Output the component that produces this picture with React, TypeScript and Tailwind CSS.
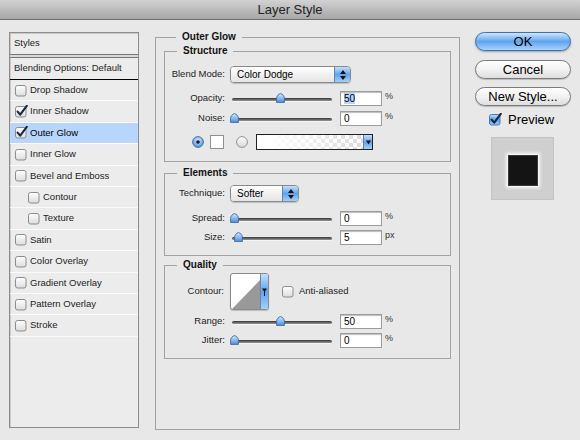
import type { ReactNode } from "react"

type StyleItem = { label: string; checked?: boolean; active?: boolean; indent?: boolean }

const styleItems: StyleItem[] = [
  { label: "Drop Shadow" },
  { label: "Inner Shadow", checked: true },
  { label: "Outer Glow", checked: true, active: true },
  { label: "Inner Glow" },
  { label: "Bevel and Emboss" },
  { label: "Contour", indent: true },
  { label: "Texture", indent: true },
  { label: "Satin" },
  { label: "Color Overlay" },
  { label: "Gradient Overlay" },
  { label: "Pattern Overlay" },
  { label: "Stroke" },
]

function CheckBox({ checked, aqua }: { checked?: boolean; aqua?: boolean }) {
  return (
    <svg width="13" height="13" viewBox="0 0 13 13" className="shrink-0">
      <defs>
        <linearGradient id="cbw" x1="0" y1="0" x2="0" y2="1">
          <stop offset="0" stopColor="#ffffff" />
          <stop offset="1" stopColor="#dcdcdc" />
        </linearGradient>
        <linearGradient id="cba" x1="0" y1="0" x2="0" y2="1">
          <stop offset="0" stopColor="#c6e0fb" />
          <stop offset="0.5" stopColor="#5a9fec" />
          <stop offset="1" stopColor="#9ccbf7" />
        </linearGradient>
      </defs>
      <rect x="0.5" y="1.5" width="10.5" height="10.5" rx="2" fill={aqua ? "url(#cba)" : "url(#cbw)"} stroke={aqua ? "#4a78b4" : "#8c8c8c"} />
      {checked ? (
        <path d="M2.6 6.6 L5.2 9.6 L11.8 0.8" fill="none" stroke="#1a2644" strokeWidth="2.1" strokeLinecap="round" strokeLinejoin="round" />
      ) : null}
    </svg>
  )
}

function Thumb() {
  return (
    <svg width="9" height="10" viewBox="0 0 9 10">
      <defs>
        <linearGradient id="thg" x1="0" y1="0" x2="0" y2="1">
          <stop offset="0" stopColor="#d6e8fc" />
          <stop offset="1" stopColor="#4b8fe0" />
        </linearGradient>
      </defs>
      <path d="M0.6 9.4V5.2C0.6 3.2 2.6 0.9 4.5 0.6C6.4 0.9 8.4 3.2 8.4 5.2V9.4Z" fill="url(#thg)" stroke="#3c68a4" strokeWidth="0.9" />
    </svg>
  )
}

function Slider({ pos }: { pos: number }) {
  return (
    <div className="relative h-[14px] w-[102px]">
      <div className="absolute left-[2px] right-0 top-[6px] h-[3px] rounded-full bg-gradient-to-b from-[#353535] to-[#9a9a9a] shadow-[0_1px_0_#f4f4f4]" />
      <div className="absolute top-[1px]" style={{ left: pos }}>
        <Thumb />
      </div>
    </div>
  )
}

function NumberBox({ value, selected }: { value: string; selected?: boolean }) {
  return (
    <div className="h-[15px] w-[42px] border border-[#9c9c9c] bg-white pl-[3px] text-[10px] leading-[13px] text-black shadow-[inset_0_1px_1px_#bdbdbd]">
      <span className={selected ? "bg-[#b5d5ff]" : ""}>{value}</span>
    </div>
  )
}

function SliderRow({ label, value, unit, pos, selected, className }: { label: string; value: string; unit: string; pos: number; selected?: boolean; className?: string }) {
  return (
    <div className={"flex h-[15px] items-center " + (className ?? "")}>
      <div className="w-[62px] pr-[2px] text-right">{label}</div>
      <div className="ml-[3px]">
        <Slider pos={pos} />
      </div>
      <div className="ml-[8px]">
        <NumberBox value={value} selected={selected} />
      </div>
      <span className="ml-[3px] self-start text-[9px] leading-[10px] text-[#333]">{unit}</span>
    </div>
  )
}

function Stepper() {
  return (
    <div className="flex w-[16px] flex-col items-center justify-center gap-[2px] border-l border-[#5a86c0] bg-gradient-to-b from-[#c4e0fc] via-[#5ea2ec] to-[#a4d0f8]">
      <svg width="6" height="4" viewBox="0 0 6 4">
        <path d="M0 4L3 0L6 4Z" fill="#111" />
      </svg>
      <svg width="6" height="4" viewBox="0 0 6 4">
        <path d="M0 0L3 4L6 0Z" fill="#111" />
      </svg>
    </div>
  )
}

function Select({ value, className }: { value: string; className: string }) {
  return (
    <div className={"flex h-[17px] overflow-hidden rounded-[4px] border border-[#8a8a8a] shadow-[0_1px_1px_rgba(0,0,0,0.18)] " + className}>
      <div className="flex-1 bg-gradient-to-b from-white to-[#e4e4e4] pl-[6px] text-[10px] leading-[15px] text-black">{value}</div>
      <Stepper />
    </div>
  )
}

function Group({ title, children, className }: { title: string; children: ReactNode; className?: string }) {
  return (
    <fieldset className={"border border-[#a2a2a2] " + (className ?? "")}>
      <legend className="ml-[12px] px-[6px] text-[10px] font-bold leading-[12px] text-[#111]">{title}</legend>
      {children}
    </fieldset>
  )
}

function Radio({ on }: { on?: boolean }) {
  return (
    <svg width="12" height="12" viewBox="0 0 12 12">
      <defs>
        <radialGradient id="rda" cx="0.5" cy="0.35" r="0.7">
          <stop offset="0" stopColor="#d6eafd" />
          <stop offset="1" stopColor="#3f87dc" />
        </radialGradient>
        <linearGradient id="rdw" x1="0" y1="0" x2="0" y2="1">
          <stop offset="0" stopColor="#ffffff" />
          <stop offset="1" stopColor="#d8d8d8" />
        </linearGradient>
      </defs>
      <circle cx="6" cy="6" r="5.4" fill={on ? "url(#rda)" : "url(#rdw)"} stroke={on ? "#3c66a0" : "#8a8a8a"} strokeWidth="0.9" />
      {on ? <circle cx="6" cy="6" r="1.8" fill="#1a1a1a" /> : null}
    </svg>
  )
}

function AquaButton({ children, primary }: { children: ReactNode; primary?: boolean }) {
  return (
    <button
      className={[
        "h-[19px] w-[96px] rounded-full border text-[13px] leading-[17px] text-black",
        primary
          ? "border-[#3c6fb3] bg-gradient-to-b from-[#cfe5fc] via-[#5fa4ee] to-[#a8d2fa] shadow-[0_1px_2px_rgba(0,0,0,0.3)]"
          : "border-[#7a7a7a] bg-gradient-to-b from-white via-[#f2f2f2] to-[#dedede] shadow-[0_1px_1px_rgba(0,0,0,0.2)]",
      ].join(" ")}
    >
      {children}
    </button>
  )
}

export default function App() {
  return (
    <div className="h-[440px] w-[580px] overflow-hidden bg-[#e8e8e8] text-[9.5px] text-[#1c1c1c] [font-family:'Liberation_Sans',Arial,sans-serif]">
      {/* title bar */}
      <div className="flex h-[20px] items-center justify-center border-b border-[#6e6e6e] bg-gradient-to-b from-[#d2d2d2] to-[#a7a7a7] text-[13px] text-[#222]">
        Layer Style
      </div>

      <div className="flex">
        {/* styles list */}
        <div className="ml-[9px] mt-[12px] h-[396px] w-[130px] border border-[#8c8c8c] bg-[#ececec] shadow-[inset_1px_1px_0_#c9c9c9]">
          <div className="flex h-[21px] items-center pl-[4px]">Styles</div>
          <div className="h-[4px] border-y border-[#777] bg-[#d9d9d9]" />
          <div className="flex h-[22px] items-center border-b border-black pl-[4px]">Blending Options: Default</div>
          {styleItems.map((s) => (
            <div
              key={s.label}
              className={[
                "flex h-[21.4px] items-center gap-[2px] border-b border-[#fbfbfb]",
                s.indent ? "pl-[18px]" : "pl-[5px]",
                s.active ? "bg-[#b8d6fd] text-black" : "",
              ].join(" ")}
            >
              <CheckBox checked={s.checked} />
              <span>{s.label}</span>
            </div>
          ))}
        </div>

        {/* main settings */}
        <Group title="Outer Glow" className="ml-[16px] mt-[11px] h-[399px] w-[305px] px-[8px]">
          <Group title="Structure" className="mt-[2px] h-[117px]">
            <div className="mt-[9px] flex items-center">
              <div className="w-[62px] pr-[2px] text-right">Blend Mode:</div>
              <Select value="Color Dodge" className="ml-[3px] w-[121px]" />
            </div>
            <SliderRow label="Opacity:" value="50" unit="%" pos={46} selected className="mt-[8px]" />
            <SliderRow label="Noise:" value="0" unit="%" pos={0} className="mt-[5px]" />
            <div className="mt-[8px] flex h-[16px] items-center">
              <div className="ml-[27px]">
                <Radio on />
              </div>
              <div className="ml-[6px] h-[14px] w-[14px] border border-[#8f8f8f] bg-white" />
              <div className="ml-[12px]">
                <Radio />
              </div>
              <div className="ml-[8px] flex h-[16px] w-[117px] border border-[#222]">
                <div className="flex-1 bg-[linear-gradient(to_right,#ffffff_10%,rgba(255,255,255,0)),repeating-conic-gradient(#dcdcdc_0_25%,#ffffff_0_50%)] [background-size:100%_100%,8px_8px]" />
                <div className="flex w-[9px] items-center justify-center border-l border-[#5a86c0] bg-gradient-to-b from-[#c4e0fc] via-[#5ea2ec] to-[#a4d0f8]">
                  <svg width="5" height="5" viewBox="0 0 5 5">
                    <path d="M0 0.5L2.5 4.5L5 0.5Z" fill="#111" />
                  </svg>
                </div>
              </div>
            </div>
          </Group>

          <Group title="Elements" className="mt-[5px] h-[89px]">
            <div className="mt-[6px] flex items-center">
              <div className="w-[62px] pr-[2px] text-right">Technique:</div>
              <div className="ml-[3px]">
                <Select value="Softer" className="w-[69px]" />
              </div>
            </div>
            <SliderRow label="Spread:" value="0" unit="%" pos={0} className="mt-[9px]" />
            <SliderRow label="Size:" value="5" unit="px" pos={4} className="mt-[4px]" />
          </Group>

          <Group title="Quality" className="mt-[3px] h-[100px]">
            <div className="mt-[2px] flex items-center">
              <div className="w-[62px] pr-[3px] text-right">Contour:</div>
              <div className="ml-[3px] flex h-[37px] w-[39px] overflow-hidden rounded-[3px] border border-[#8a8a8a] bg-white shadow-[0_1px_1px_rgba(0,0,0,0.2)]">
                <svg width="29" height="35" viewBox="0 0 29 35" className="shrink-0">
                  <path d="M1 35L29 6V35Z" fill="#999999" />
                </svg>
                <div className="flex flex-1 items-center justify-center border-l border-[#5a86c0] bg-gradient-to-b from-[#c4e0fc] via-[#5ea2ec] to-[#a4d0f8]">
                  <svg width="5" height="8" viewBox="0 0 5 8">
                    <path d="M0 0.5H5L2.5 4Z" fill="#111" />
                    <rect x="2" y="3" width="1" height="5" fill="#111" />
                  </svg>
                </div>
              </div>
              <div className="ml-[13px]">
                <CheckBox />
              </div>
              <span className="ml-[4px]">Anti-aliased</span>
            </div>
            <SliderRow label="Range:" value="50" unit="%" pos={46} className="mt-[4px]" />
            <SliderRow label="Jitter:" value="0" unit="%" pos={0} className="mt-[4px]" />
          </Group>
        </Group>

        {/* buttons */}
        <div className="ml-[15px] mt-[12px] flex w-[96px] flex-col items-center">
          <AquaButton primary>OK</AquaButton>
          <div className="mt-[9px]">
            <AquaButton>Cancel</AquaButton>
          </div>
          <div className="mt-[8px]">
            <AquaButton>New Style...</AquaButton>
          </div>
          <div className="mt-[6px] flex items-center gap-[6px] self-start pl-[14px] text-[13px] leading-[15px] text-black">
            <CheckBox checked aqua />
            <span>Preview</span>
          </div>
          <div className="ml-[16px] mt-[10px] flex h-[63px] w-[63px] items-center justify-center self-start border border-[#c4c4c4] bg-[#cfcfcf]">
            <div className="mt-[3px] h-[31px] w-[30px] border border-[#3a3a3a] bg-[#141414] shadow-[0_0_3px_2px_rgba(255,255,255,0.9)]" />
          </div>
        </div>
      </div>
    </div>
  )
}
